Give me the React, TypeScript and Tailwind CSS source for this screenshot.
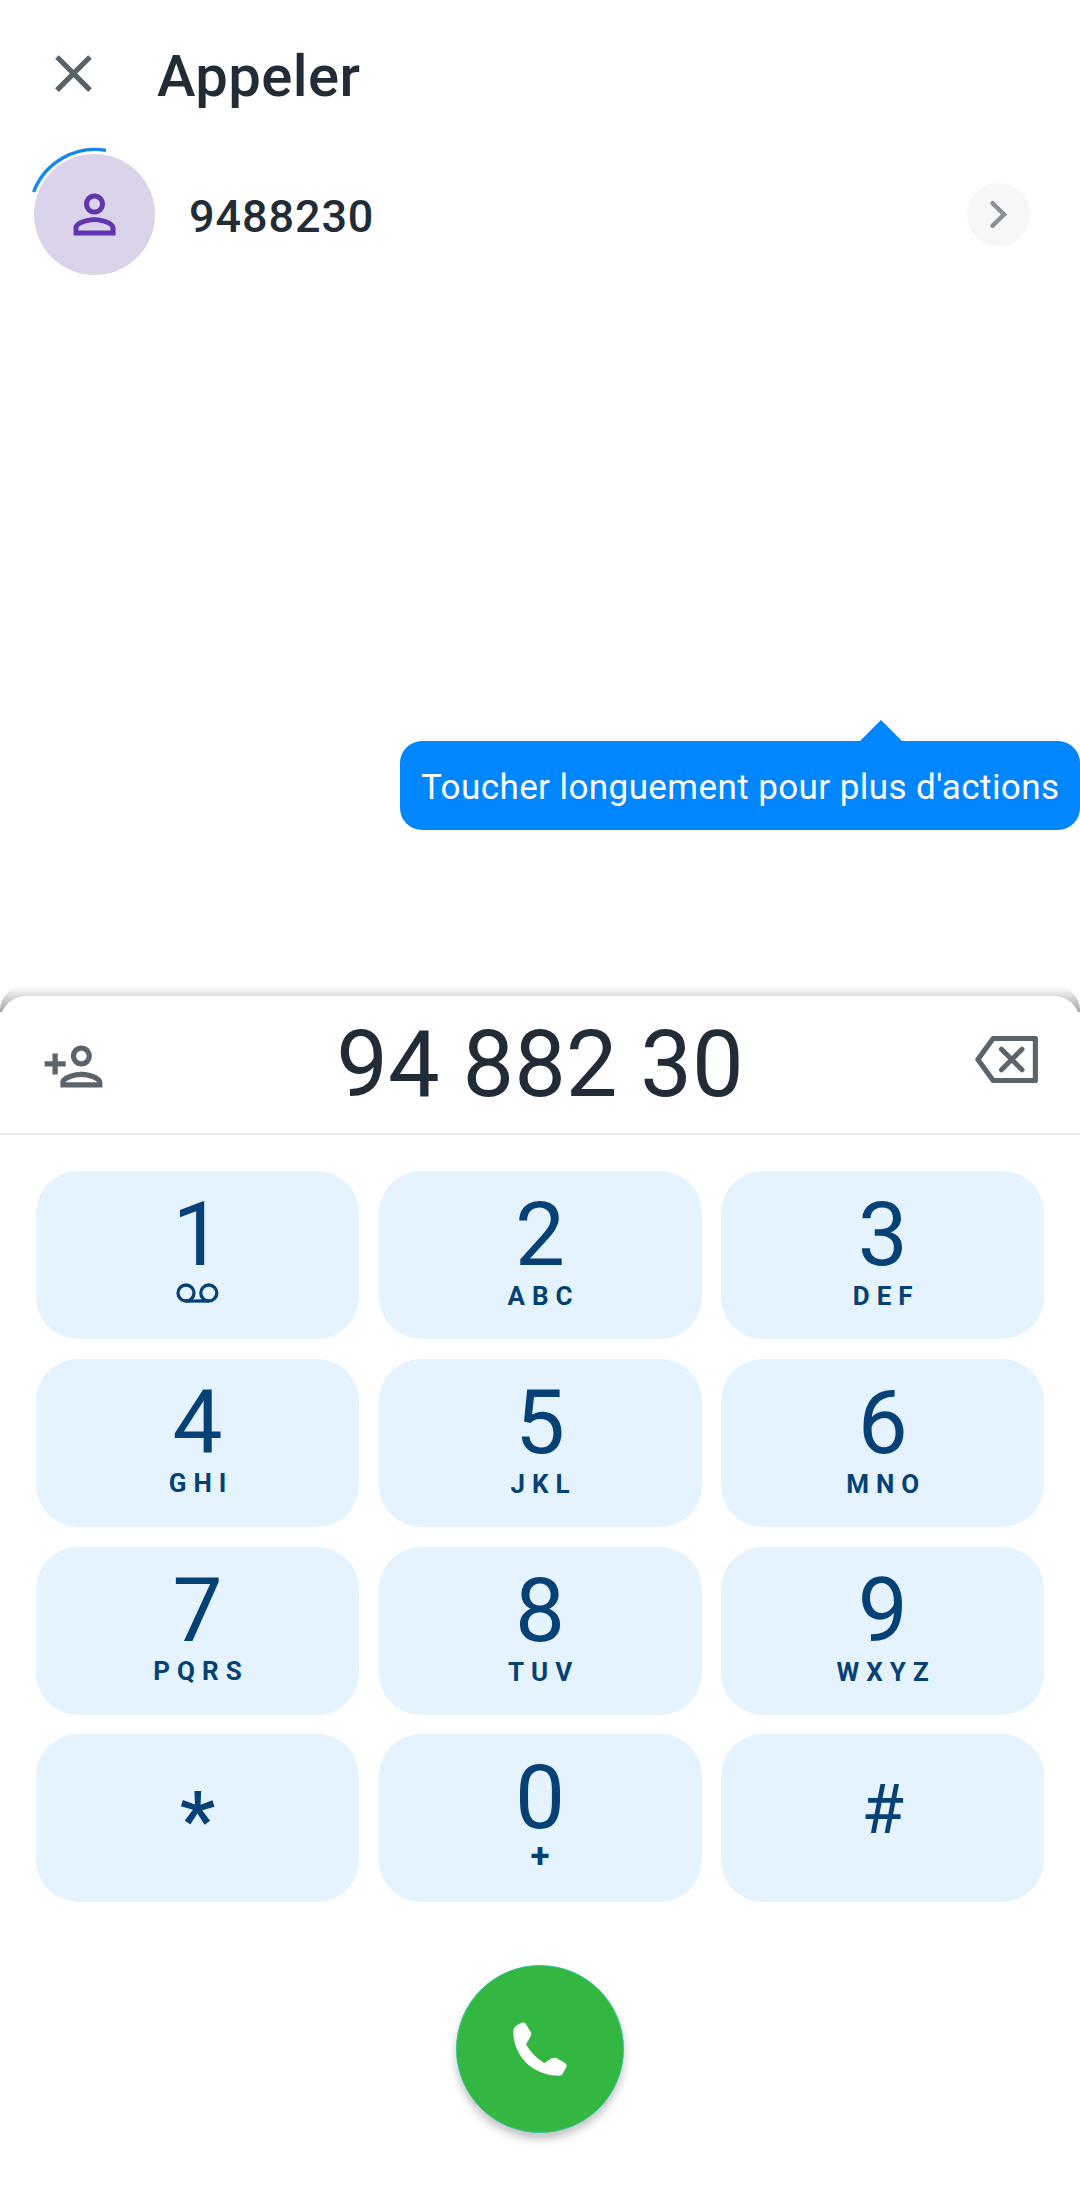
import React from "react";

type KeyDef = { digit: string; letters?: string; voicemail?: boolean; raised?: boolean };

const keys: KeyDef[] = [
  { digit: "1", voicemail: true },
  { digit: "2", letters: "ABC" },
  { digit: "3", letters: "DEF" },
  { digit: "4", letters: "GHI", raised: true },
  { digit: "5", letters: "JKL" },
  { digit: "6", letters: "MNO" },
  { digit: "7", letters: "PQRS", raised: true },
  { digit: "8", letters: "TUV" },
  { digit: "9", letters: "WXYZ" },
  { digit: "*" },
  { digit: "0", letters: "+" },
  { digit: "#" },
];

function CloseIcon() {
  return (
    <svg viewBox="0 0 24 24" className="mb-[2px] size-[63px] fill-[#5a6269]">
      <path d="M19 6.41 17.59 5 12 10.59 6.41 5 5 6.41 10.59 12 5 17.59 6.41 19 12 13.41 17.59 19 19 17.59 13.41 12z" />
    </svg>
  );
}

function Avatar() {
  return (
    <div className="relative flex size-[121px] items-center justify-center rounded-full bg-[#dad3ea]">
      <svg viewBox="0 0 24 24" className="mb-px size-[63px] fill-[#5f36ae]">
        <path d="M12 5.9a2.1 2.1 0 1 1 0 4.2 2.1 2.1 0 0 1 0-4.2m0 9c2.97 0 6.1 1.46 6.1 2.1v1.1H5.9V17c0-.64 3.13-2.1 6.1-2.1M12 4C9.79 4 8 5.79 8 8s1.79 4 4 4 4-1.79 4-4-1.79-4-4-4zm0 9c-2.67 0-8 1.34-8 4v3h16v-3c0-2.66-5.33-4-8-4z" />
      </svg>
      <svg viewBox="0 0 136 136" className="absolute -left-[7.5px] -top-[7.5px] size-[136px]">
        <path d="M6.6 45A65.5 65.5 0 0 1 79 3.4" fill="none" stroke="#1687ec" strokeWidth="3.4" />
      </svg>
    </div>
  );
}

function AddPersonIcon() {
  return (
    <svg viewBox="0 0 24 24" className="mt-[3px] size-[63px] fill-[#5c646b]">
      <path d="M15 12c2.21 0 4-1.79 4-4s-1.79-4-4-4-4 1.79-4 4 1.79 4 4 4zm0-6c1.1 0 2 .9 2 2s-.9 2-2 2-2-.9-2-2 .9-2 2-2zm0 8c-2.67 0-8 1.34-8 4v2h16v-2c0-2.66-5.33-4-8-4zm-6 4c.22-.72 3.31-2 6-2 2.7 0 5.8 1.29 6 2H9zm-3-3v-3h3v-2H6V7H4v3H1v2h3v3h2z" />
    </svg>
  );
}

function BackspaceIcon() {
  return (
    <svg viewBox="0 0 24 24" className="mb-[10px] size-[63px] fill-none stroke-[#5c646b]">
      <path d="M6.9 4H23v16H6.9L1.1 12z" strokeWidth="1.95" strokeLinejoin="round" />
      <path d="M10.1 8.1l7.8 7.8M17.9 8.1l-7.8 7.8" strokeWidth="1.9" strokeLinecap="round" />
    </svg>
  );
}

function VoicemailIcon() {
  return (
    <svg viewBox="0 0 43 20" className="mr-px mt-[3px] h-[20px] w-[43px] fill-none stroke-[#064175]" strokeWidth="3.3">
      <circle cx="10" cy="10" r="8" />
      <circle cx="32.8" cy="10" r="8" />
      <path d="M10 18h22.8" />
    </svg>
  );
}

function Key({ digit, letters, voicemail, raised }: KeyDef) {
  return (
    <button className="flex h-[168px] flex-col items-center rounded-[42px] bg-[#e4f3fe] pt-[19px] text-[#064175]">
      {digit === "*" ? (
        <span className="mt-[23px] text-[80px] font-medium leading-[90px]">*</span>
      ) : digit === "#" ? (
        <span className="mt-[12px] text-[69px] leading-[90px]">#</span>
      ) : (
        <span className="text-[89px] leading-[90px]">{digit}</span>
      )}
      {voicemail && <VoicemailIcon />}
      {letters === "+" && <span className="-mt-[4px] text-[35px] font-bold leading-[35px]">+</span>}
      {letters && letters !== "+" && (
        <span
          className={
            raised
              ? "mt-[2px] pl-[7px] text-[26px] font-bold leading-[26px] tracking-[7px]"
              : "mt-[3px] pl-[7px] text-[26px] font-bold leading-[26px] tracking-[7px]"
          }
        >
          {letters}
        </span>
      )}
    </button>
  );
}

export default function App() {
  return (
    <div className="flex h-[2186px] w-[1080px] flex-col overflow-hidden bg-white font-['Roboto',sans-serif] text-[#222c36]">
      <header className="flex h-[148px] shrink-0 items-center pl-[42px]">
        <CloseIcon />
        <h1 className="ml-[52px] mt-[4px] text-[58px] font-medium leading-[68px] tracking-[0.4px]">Appeler</h1>
      </header>

      <section className="mt-[6px] flex h-[121px] shrink-0 items-center pl-[34px] pr-[50px]">
        <Avatar />
        <span className="ml-[34px] mt-[5px] grow text-[45px] font-medium leading-[54px] tracking-[0.9px]">9488230</span>
        <button className="flex size-[63px] items-center justify-center rounded-full bg-[#f5f7f9]">
          <svg viewBox="0 0 24 24" className="size-[51px] fill-none stroke-[#8b9098]" strokeWidth="2.1">
            <path d="M9.2 6.7 14.6 12l-5.4 5.3" strokeLinecap="round" />
          </svg>
        </button>
      </section>

      <div className="ml-[400px] mt-[445px] flex shrink-0 flex-col">
        <svg viewBox="0 0 42 21" className="ml-[460px] h-[21px] w-[42px] fill-[#0086ff]">
          <path d="M0 21 21 0l21 21z" />
        </svg>
        <div className="h-[89px] whitespace-nowrap rounded-[22px] bg-[#0086ff] pl-[21px] text-[35px] leading-[94px] tracking-[0.42px] text-white">
          Toucher longuement pour plus d'actions
        </div>
      </div>

      <section className="mt-[156px] shrink-0 rounded-t-[24px] bg-[linear-gradient(to_bottom,#ffffff,#dcdcdc_10px,#a6a6a6_26px)] bg-[length:100%_26px] bg-no-repeat pt-[10px]">
        <div className="flex h-[139px] items-center justify-between rounded-t-[26px] border-b-2 border-[#ebebeb] bg-white pl-[42px] pr-[42px]">
          <AddPersonIcon />
          <span className="mt-px text-[92px] leading-[100px]">94 882 30</span>
          <BackspaceIcon />
        </div>
        <div className="grid grid-cols-[323px_323px_323px] gap-x-[19.6px] gap-y-[19.8px] pl-[36px] pt-[36px]">
          {keys.map((k) => (
            <Key key={k.digit} {...k} />
          ))}
        </div>
      </section>

      <button className="mt-[63px] flex size-[168px] shrink-0 items-center justify-center self-center rounded-full border border-[#2fc79c] bg-[#34b740] shadow-[0_6px_8px_rgba(0,0,0,0.24)]">
        <svg viewBox="248 245 161 161" className="mb-[1px] size-[54px] fill-white">
          <path d="M252 262Q255 254 275 247Q282 245 286 250L300 273Q304 280 301 287L287 312Q307 347 341 367L364 353Q372 350 379 353L403 367Q410 372 407 379L398 396Q394 404 387 405C300 405 248 340 249 272Q249 266 252 262Z" />
        </svg>
      </button>
    </div>
  );
}
